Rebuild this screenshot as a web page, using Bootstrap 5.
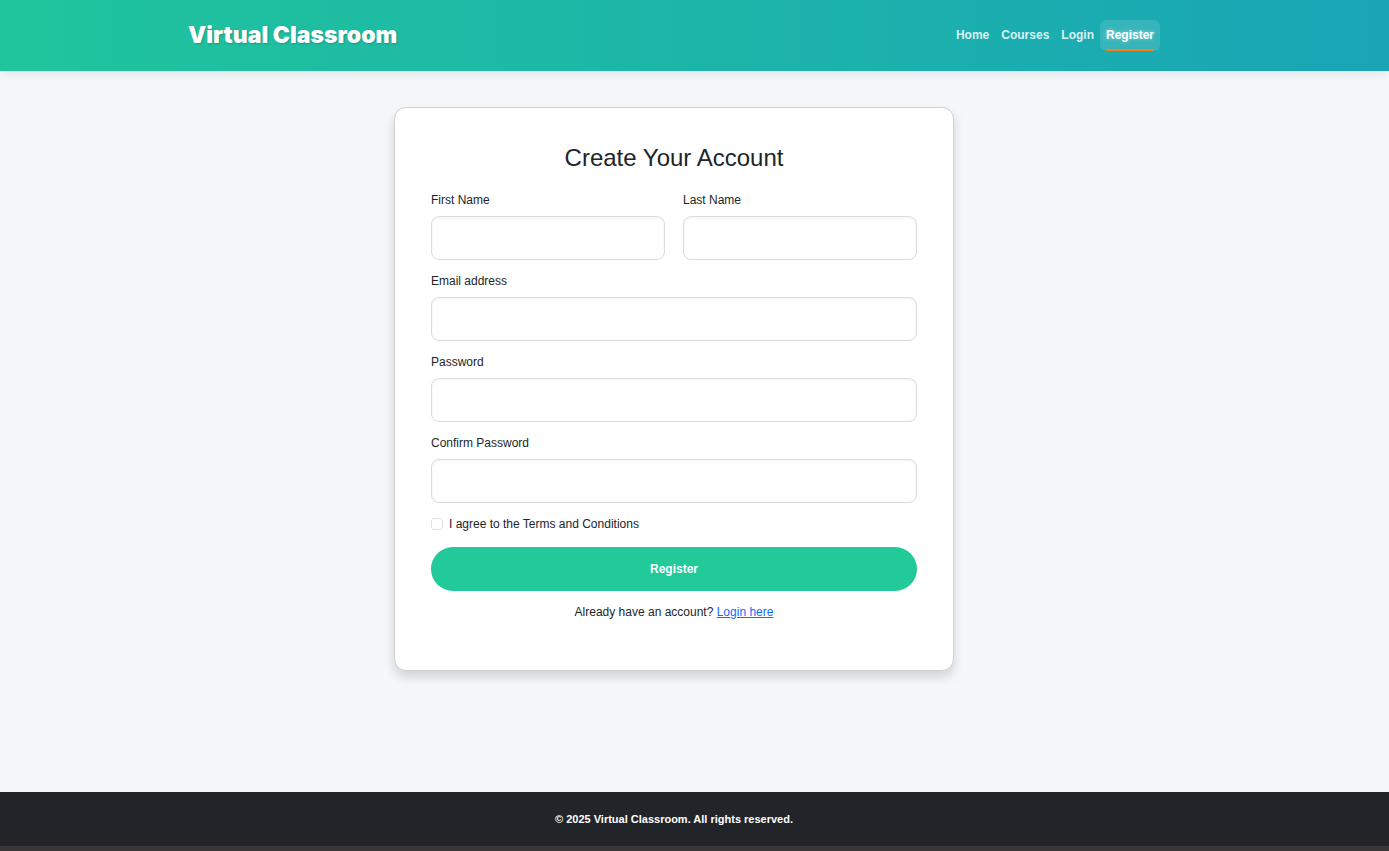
<!DOCTYPE html>
<html lang="en">
<head>
<meta charset="utf-8">
<meta name="viewport" content="width=device-width, initial-scale=1">
<title>Register - Virtual Classroom</title>
<link href="https://cdn.jsdelivr.net/npm/bootstrap@5.3.0/dist/css/bootstrap.min.css" rel="stylesheet">
<style>
body { font-family: "Liberation Sans", Arial, sans-serif; font-size: 12px; line-height: 18px; background: #f4f8fb; }
.gutter-end { padding-right: 41px; }
.page-width { max-width: 990px; padding: 0 9px; }
.site-header { background: linear-gradient(90deg, #20c59c, #19a5b6); box-shadow: 0 3px 9px rgba(0,0,0,.08); }
.site-header .navbar { padding: 17px 0 18px; }
.site-header .navbar-brand { font-family: Inter, sans-serif; font-weight: 900; font-size: 23px; line-height: 36px; padding: 0; margin: 0; color: #fff; text-shadow: 1px 1px 2px rgba(0,0,0,.2); }
.site-header .navbar-nav .nav-link { position: relative; padding: 6px; line-height: 19px; font-weight: 700; color: rgba(255,255,255,.85); border-radius: 6px; }
.site-header .navbar-nav .nav-link.active { color: #fff; background: rgba(255,255,255,.12); text-shadow: 0 0 4px rgba(255,255,255,.5); }
.site-header .nav-link.active::after { content: ""; position: absolute; left: 6px; right: 6px; bottom: 0; height: 2px; background: #fd7e14; }
.register-main { padding-top: 36px; padding-bottom: 36px; }
.register-card { max-width: 560px; padding: 36px; border-color: #ced0d2; border-radius: 12px; box-shadow: 0 6px 12px rgba(0,0,0,.15); }
.register-card h2 { font-size: 24px; line-height: 28px; margin-bottom: 19px; }
.register-card .row { --bs-gutter-x: 18px; }
.field { margin-bottom: 12px; }
.register-card .form-label { display: block; line-height: 19px; margin-bottom: 6px; }
.register-card .form-control { height: 44px; font-size: 12px; border-color: #dadcde; border-radius: 8px; box-shadow: inset 0 1px 3px rgba(0,0,0,.06); }
.terms { gap: 6px; margin-bottom: 14px; }
.terms .form-check-input { width: 12px; height: 12px; margin: 0; border-radius: 3px; }
.btn-register { height: 44px; font-size: 12px; font-weight: 700; color: #fff; background: #22ca9a; border: 0; margin-bottom: 12px; }
.btn-register:hover { color: #fff; background: #1bb489; }
.register-card a { color: #0d6efd; }
.login-hint { margin-bottom: 13px; }
.site-footer { font-size: 11px; font-weight: 700; padding-top: 18px; padding-bottom: 18px; border-bottom: 5px solid #3a3637; background: #212529; }
</style>
</head>
<body class="d-flex flex-column min-vh-100">
<header class="site-header gutter-end">
  <div class="container page-width">
    <nav class="navbar navbar-expand d-flex justify-content-between">
      <a class="navbar-brand" href="#">Virtual Classroom</a>
      <ul class="navbar-nav">
        <li class="nav-item"><a class="nav-link" href="#">Home</a></li>
        <li class="nav-item"><a class="nav-link" href="#">Courses</a></li>
        <li class="nav-item"><a class="nav-link" href="#">Login</a></li>
        <li class="nav-item"><a class="nav-link active" aria-current="page" href="#">Register</a></li>
      </ul>
    </nav>
  </div>
</header>
<main class="register-main gutter-end flex-grow-1">
  <div class="card register-card mx-auto">
    <h2 class="text-center">Create Your Account</h2>
    <form>
      <div class="row">
        <div class="col field">
          <label class="form-label" for="firstName">First Name</label>
          <input class="form-control" type="text" id="firstName">
        </div>
        <div class="col field">
          <label class="form-label" for="lastName">Last Name</label>
          <input class="form-control" type="text" id="lastName">
        </div>
      </div>
      <div class="field">
        <label class="form-label" for="email">Email address</label>
        <input class="form-control" type="email" id="email">
      </div>
      <div class="field">
        <label class="form-label" for="password">Password</label>
        <input class="form-control" type="password" id="password">
      </div>
      <div class="field">
        <label class="form-label" for="confirm">Confirm Password</label>
        <input class="form-control" type="password" id="confirm">
      </div>
      <div class="terms d-flex align-items-center">
        <input class="form-check-input" type="checkbox" id="terms">
        <label for="terms">I agree to the Terms and Conditions</label>
      </div>
      <button class="btn btn-register rounded-pill w-100" type="submit">Register</button>
      <p class="login-hint text-center">Already have an account? <a href="#">Login here</a></p>
    </form>
  </div>
</main>
<footer class="site-footer gutter-end text-white text-center">
  <div class="container page-width">© 2025 Virtual Classroom. All rights reserved.</div>
</footer>
<script src="https://cdn.jsdelivr.net/npm/bootstrap@5.3.0/dist/js/bootstrap.bundle.min.js"></script>
</body>
</html>
